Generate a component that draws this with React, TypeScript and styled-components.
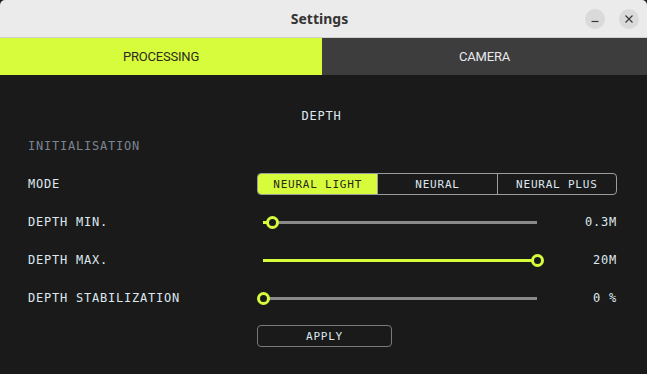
import React from "react";
import styled, { createGlobalStyle } from "styled-components";

const LIME = "#d7fc3c";

const GlobalStyle = createGlobalStyle`
  html, body {
    margin: 0;
    padding: 0;
    background: #1a1a1a;
  }
  * {
    box-sizing: border-box;
  }
`;

const Window = styled.div`
  width: 647px;
  height: 374px;
  display: flex;
  flex-direction: column;
  background: #1a1a1a;
  overflow: hidden;
`;

const TitleBar = styled.div`
  height: 38px;
  flex: none;
  display: grid;
  grid-template-columns: 1fr auto 1fr;
  align-items: center;
  background: #ebebeb;
  border-bottom: 1px solid #cfcfcf;
  border-radius: 5px 5px 0 0;
  padding: 0 8px 0 0;
`;

const Title = styled.div`
  grid-column: 2;
  font-family: "Noto Sans", "DejaVu Sans", sans-serif;
  font-weight: 700;
  font-size: 14px;
  color: #343434;
`;

const WindowButtons = styled.div`
  grid-column: 3;
  justify-self: end;
  display: flex;
  gap: 14px;
`;

const RoundButton = styled.div`
  width: 20px;
  height: 20px;
  border-radius: 50%;
  background: #dadada;
  display: flex;
  align-items: center;
  justify-content: center;
  color: #3a3a3a;
`;

const Tabs = styled.div`
  height: 37px;
  flex: none;
  display: grid;
  grid-template-columns: 322px 1fr;
`;

const Tab = styled.div<{ $active?: boolean }>`
  display: flex;
  align-items: center;
  justify-content: center;
  font-family: Roboto, "Noto Sans", sans-serif;
  font-size: 13px;
  letter-spacing: -0.2px;
  background: ${(p) => (p.$active ? LIME : "#3d3d3d")};
  color: ${(p) => (p.$active ? "#2b2b22" : "#e8eaee")};
`;

const Content = styled.div`
  padding: 30px 30px 0 28px;
  font-family: "DejaVu Sans Mono", "Liberation Mono", monospace;
  font-size: 12px;
  letter-spacing: 0.065em;
  color: #dde7ef;
`;

const Heading = styled.div`
  height: 22px;
  display: flex;
  align-items: center;
  justify-content: center;
  padding-right: 2px;
`;

const Form = styled.div`
  display: grid;
  grid-template-columns: 229px 286px 1fr;
  grid-auto-rows: 38px;
  align-items: center;
`;

const Section = styled.div`
  grid-column: 1 / -1;
  color: #7a8492;
`;

const Label = styled.div`
  grid-column: 1;
`;

const Value = styled.div`
  grid-column: 3;
  text-align: right;
`;

const Segmented = styled.div`
  grid-column: 2 / 4;
  height: 22px;
  display: grid;
  grid-template-columns: repeat(3, 1fr);
  border: 1px solid #9c9c9c;
  border-radius: 4px;
  overflow: hidden;
`;

const Segment = styled.div<{ $active?: boolean }>`
  display: flex;
  align-items: center;
  justify-content: center;
  font-size: 11px;
  background: ${(p) => (p.$active ? LIME : "transparent")};
  color: ${(p) => (p.$active ? "#2a2a20" : "#dde7ef")};
  & + & {
    border-left: 1px solid #9c9c9c;
  }
`;

const SliderBox = styled.div`
  grid-column: 2;
  position: relative;
  height: 12px;
`;

const Track = styled.div`
  position: absolute;
  left: 6px;
  right: 6px;
  top: 5px;
  height: 3px;
  background: #8a8a8a;
`;

const Fill = styled.div`
  position: absolute;
  left: 0;
  top: 0;
  bottom: 0;
  background: ${LIME};
`;

const Thumb = styled.div`
  position: absolute;
  top: -5.5px;
  width: 13px;
  height: 13px;
  margin-left: -6.5px;
  border-radius: 50%;
  border: 3px solid ${LIME};
  background: #1a1a1a;
`;

const ApplyButton = styled.div`
  grid-column: 2;
  width: 135px;
  height: 22px;
  display: flex;
  align-items: center;
  justify-content: center;
  border: 1px solid #7a7a7a;
  border-radius: 4px;
  font-size: 11px;
`;

const Slider = ({ percent }: { percent: number }) => (
  <SliderBox>
    <Track>
      <Fill style={{ width: `${percent}%` }} />
      <Thumb style={{ left: `${percent}%` }} />
    </Track>
  </SliderBox>
);

const sliders = [
  { label: "DEPTH MIN.", percent: 3.6, value: "0.3M" },
  { label: "DEPTH MAX.", percent: 100, value: "20M" },
  { label: "DEPTH STABILIZATION", percent: 0, value: "0 %" },
];

export default function App() {
  return (
    <Window>
      <GlobalStyle />
      <TitleBar>
        <Title>Settings</Title>
        <WindowButtons>
          <RoundButton>
            <svg width="10" height="10" viewBox="0 0 10 10">
              <path d="M1.5 7.5h7" stroke="currentColor" strokeWidth="1.2" />
            </svg>
          </RoundButton>
          <RoundButton>
            <svg width="10" height="10" viewBox="0 0 10 10">
              <path d="M1.5 1.5l7 7M8.5 1.5l-7 7" stroke="currentColor" strokeWidth="1.2" />
            </svg>
          </RoundButton>
        </WindowButtons>
      </TitleBar>
      <Tabs>
        <Tab $active>PROCESSING</Tab>
        <Tab>CAMERA</Tab>
      </Tabs>
      <Content>
        <Heading>DEPTH</Heading>
        <Form>
          <Section>INITIALISATION</Section>
          <Label>MODE</Label>
          <Segmented>
            <Segment $active>NEURAL LIGHT</Segment>
            <Segment>NEURAL</Segment>
            <Segment>NEURAL PLUS</Segment>
          </Segmented>
          {sliders.map((s) => (
            <React.Fragment key={s.label}>
              <Label>{s.label}</Label>
              <Slider percent={s.percent} />
              <Value>{s.value}</Value>
            </React.Fragment>
          ))}
          <ApplyButton>APPLY</ApplyButton>
        </Form>
      </Content>
    </Window>
  );
}
